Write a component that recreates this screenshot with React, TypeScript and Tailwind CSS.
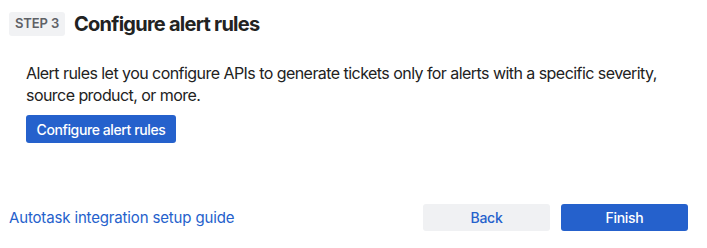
export default function App() {
  return (
    <div className="w-[707px] h-[248px] bg-white text-[#1f2328]" style={{ fontFamily: "Inter, 'Noto Sans', sans-serif" }}>
      <div className="flex items-center gap-[9px] pl-[9px] pt-[12px]">
        <span className="h-[24px] w-[56px] justify-center flex items-center rounded-[3px] bg-[#f1f2f4] text-[13px] font-semibold tracking-[-0.1px] text-[#5e6166]">STEP 3</span>
        <h2 className="text-[20px] font-bold text-[#222] leading-[24px] tracking-[-0.75px]">Configure alert rules</h2>
      </div>
      <div className="pl-[26px] pt-[26px]">
        <p className="text-[16px] leading-[22px] text-[#222] w-[660px] tracking-[-0.55px]">
          Alert rules let you configure APIs to generate tickets only for alerts with a specific severity, source product, or more.
        </p>
        <button className="mt-[9px] h-[28px] w-[150px] rounded-[3px] bg-[#2561cc] text-white text-[14px] font-medium tracking-[-0.4px]">Configure alert rules</button>
      </div>
      <div className="flex items-center pl-[9px] pr-[19px] mt-[61px]">
        <a className="text-[15px] text-[#2561cc] tracking-[-0.15px] translate-y-[1px]">Autotask integration setup guide</a>
        <div className="ml-auto flex gap-[11px]">
          <button className="h-[27px] w-[127px] rounded-[3px] bg-[#f0f1f3] text-[#2561cc] text-[14px] font-medium tracking-[-0.3px]">Back</button>
          <button className="h-[27px] w-[127px] rounded-[3px] bg-[#2561cc] text-white text-[14px] font-medium tracking-[-0.3px]">Finish</button>
        </div>
      </div>
    </div>
  );
}
